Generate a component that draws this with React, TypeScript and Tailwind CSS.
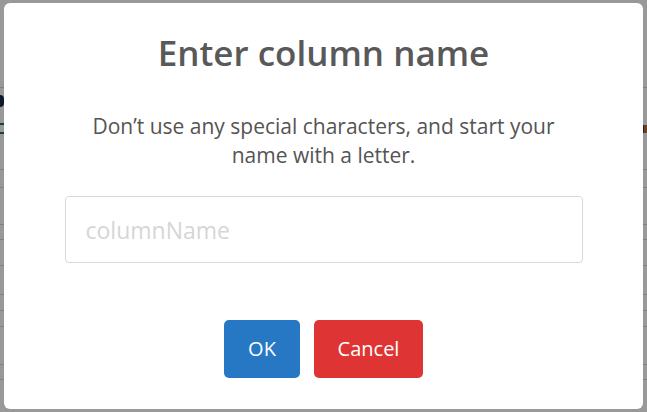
import React from 'react';

const rowHeights = [88, 27, 28, 27, 18, 37, 15, 26, 29, 16, 16, 38, 15];

function BackgroundPage() {
  return (
    <div className="flex flex-col w-full h-[412px] bg-white overflow-hidden">
      {rowHeights.map((h, i) => (
        <div
          key={i}
          className={`flex items-center justify-between shrink-0 border-b ${i === 1 || i === 2 ? 'border-transparent' : 'border-[#d6d6d6]'}`}
          style={{ height: h }}
        >
          {i === 1 && <span className="w-[4px] h-[12px] rounded-r-full bg-[#1a2a4a]" />}
          {i === 2 && (
            <>
              <span className="w-[4px] h-[11px] border-y-2 border-r-0 border-[#2b6b6b] bg-white" />
              <span className="w-[4px] h-[8px] bg-[#c06a2a] border-l border-[#1d3d6d]" />
            </>
          )}
        </div>
      ))}
    </div>
  );
}

export default function App() {
  return (
    <div className="relative w-[647px] h-[412px] overflow-hidden" style={{ fontFamily: '"Open Sans", "Noto Sans", sans-serif' }}>
      <BackgroundPage />

      {/* Modal overlay */}
      <div className="absolute inset-0 bg-black/40 flex items-start justify-start pt-[3px] pl-[4px]">
        <div className="w-[639px] h-[406px] bg-white rounded-[6px] flex flex-col items-center">
          <h2 className="mt-[26px] text-[35px] leading-[48px] font-semibold text-[#595959]">Enter column name</h2>

          <p className="mt-[35px] w-[480px] text-center text-[21px] leading-[29px] text-[#545454]">
            Don’t use any special characters, and start your name with a letter.
          </p>

          <input
            className="mt-[26px] w-[518px] h-[67px] px-[20px] border border-[#d9d9d9] rounded-[4px] text-[23px] text-[#545454] placeholder:text-[#d6d6d6] outline-none"
            placeholder="columnName"
          />

          <div className="mt-[57px] flex gap-[14px]">
            <button className="h-[58px] w-[76px] rounded-[5px] bg-[#2778c4] text-white text-[20px]">OK</button>
            <button className="h-[58px] w-[109px] rounded-[5px] bg-[#df3434] text-white text-[20px]">Cancel</button>
          </div>
        </div>
      </div>
    </div>
  );
}
